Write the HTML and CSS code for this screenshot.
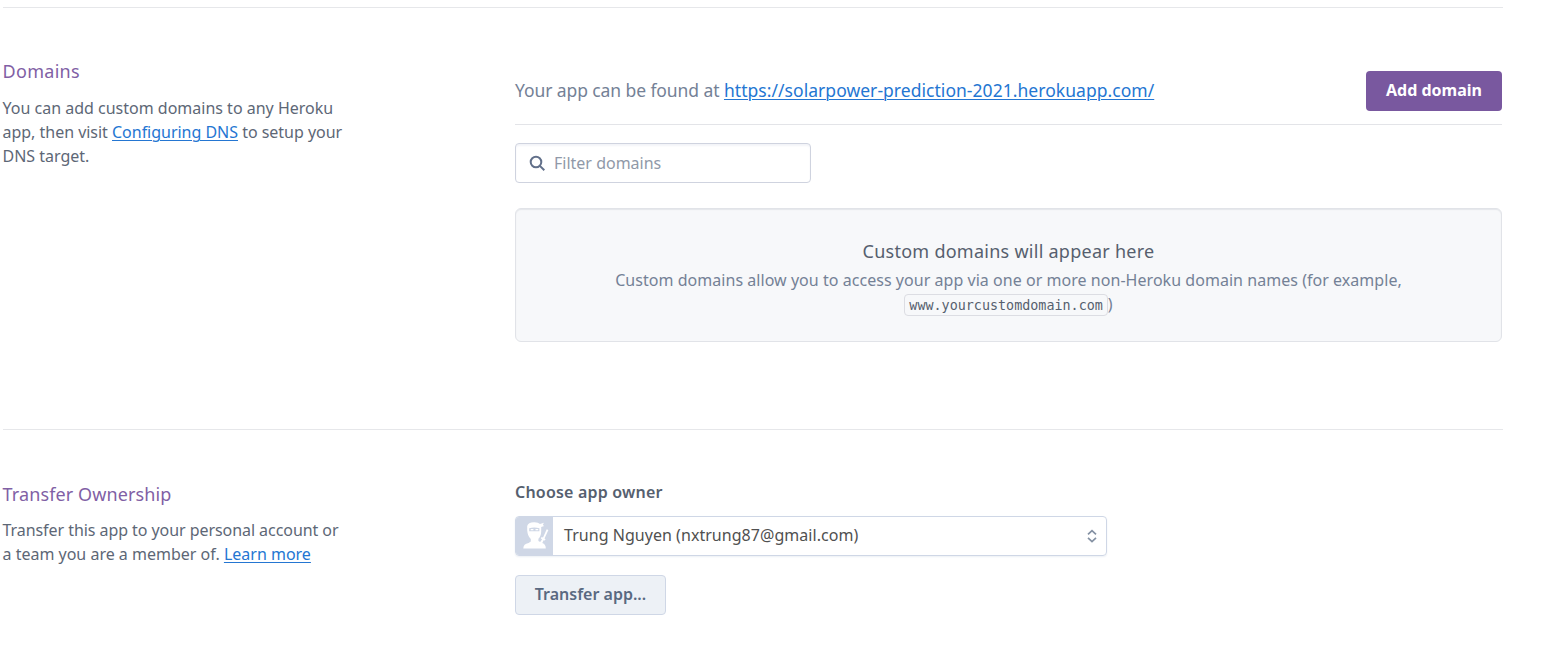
FILE: index.html
```html
<!DOCTYPE html>
<html lang="en">
<head>
<meta charset="utf-8">
<title>App settings</title>
<link rel="stylesheet" href="styles.css">
</head>
<body>
<main class="settings">
  <section class="section domains">
    <div class="intro">
      <h2 class="title domains-title">Domains</h2>
      <p class="copy">
        <span class="line line-add">You can add custom domains to any Heroku</span>
        <span class="line line-visit">app, then visit <a href="#">Configuring DNS</a> to setup your</span>
        <span class="line line-target">DNS target.</span>
      </p>
    </div>
    <div class="content">
      <div class="domain-bar">
        <p class="found"><span class="found-label">Your app can be found at</span> <a class="found-link" href="#">https://solarpower-prediction-2021.herokuapp.com/</a></p>
        <button class="button primary">Add domain</button>
      </div>
      <label class="filter">
        <svg class="search-icon" width="17" height="17" viewBox="0 0 17 17"><circle cx="7" cy="7" r="5.3"/><path d="M10.9 10.9l4.4 4.4"/></svg>
        <input class="filter-input" type="text" placeholder="Filter domains">
      </label>
      <div class="well">
        <h3 class="well-title">Custom domains will appear here</h3>
        <p class="well-copy">Custom domains allow you to access your app via one or more non-Heroku domain names (for example,</p>
        <p class="well-example"><code class="code">www.yourcustomdomain.com</code>)</p>
      </div>
    </div>
  </section>
  <section class="section transfer">
    <div class="intro">
      <h2 class="title transfer-title">Transfer Ownership</h2>
      <p class="copy">
        <span class="line line-account">Transfer this app to your personal account or</span>
        <span class="line line-team">a team you are a member of. <a href="#">Learn more</a></span>
      </p>
    </div>
    <div class="content">
      <div class="owner-label">Choose app owner</div>
      <div class="owner-select">
        <svg class="avatar" width="37" height="38" viewBox="0 0 37 38">
          <path class="ninja" d="M11.2 9Q12 5.5 18 5.2Q22.4 5.1 24 7L27.9 5.8L26.8 8L28.2 9L25.2 10V14.5Q25 19.5 22.4 21.7V24L24.2 25L26.1 22.2L24.8 21.4L25.6 20L27 20.6L30.7 12.2L32.4 13L28.5 21.4L29.6 22.2L28.8 23.6L27.6 23.2L26.3 26.1Q29.8 27.2 29.8 31.5H7.3Q7.3 26.7 12.6 25.9L14.8 24.5V22Q11.6 19.2 11.2 13.2Z"/>
          <path class="mask" d="M13.2 11.2Q18.2 9.8 23.4 11.2V14.2H13.2Z"/>
          <path class="eyes" d="M14.7 12.7h2.7M19.5 12.7h2.7"/>
        </svg>
        <span class="owner-name">Trung Nguyen (nxtrung87@gmail.com)</span>
        <svg class="sort-icon" width="12" height="16" viewBox="0 0 12 16"><path d="M2 6.4l4-3.7 4 3.7M2 9.8l4 3.7 4-3.7"/></svg>
      </div>
      <button class="button secondary">Transfer app...</button>
    </div>
  </section>
</main>
</body>
</html>
```

FILE: styles.css
```css
* { box-sizing: border-box; }
body { margin: 0; background: #fff; color: #596981; font: 16px/24px "Noto Sans", "Open Sans", sans-serif; }
h2, h3, p { margin: 0; font-weight: 400; }
a { color: #2476d2; text-decoration: underline; text-underline-offset: 2px; text-decoration-thickness: 1px; }
.settings { width: 1503px; padding: 7px 0 0 3px; }
.section { display: grid; grid-template-columns: 512px 987px; border-top: 1px solid #e6e7ea; }
.domains { height: 422px; padding-top: 50px; }
.transfer { padding-top: 51px; }
.title { color: #815fa5; font-size: 18px; line-height: 27px; margin-bottom: 11px; margin-left: -.5px; }
.domains-title { letter-spacing: .3px; }
.transfer-title { margin-bottom: 10px; letter-spacing: .12px; }
.copy { color: #5d6776; margin-left: -.5px; }
.line { display: block; white-space: nowrap; }
.line-visit { letter-spacing: -.02px; }
.line-account { letter-spacing: -.06px; }
.domain-bar { display: flex; justify-content: space-between; align-items: center; height: 67px; border-bottom: 1px solid #e3e4e8; }
.found { color: #748196; font-size: 17.5px; white-space: nowrap; padding-bottom: 2px; }
.found-label { letter-spacing: -.09px; }
.found-link { letter-spacing: .04px; }
.button { height: 40px; font: 600 16px/22px "Noto Sans", "Open Sans", sans-serif; border-radius: 4px; padding: 0 0 2px; white-space: nowrap; }
.primary { width: 136px; color: #fff; background: #79589f; border: 0; font-weight: 700; }
.filter { display: flex; align-items: center; width: 296px; height: 40px; margin-top: 18px; padding-left: 13px; gap: 8px; border: 1px solid #cfd3df; border-radius: 4px; box-shadow: inset 0 2px 2px #f3f4f8; }
.search-icon { fill: none; stroke: #62708a; stroke-width: 2; }
.filter-input { width: 240px; padding: 0; border: 0; outline: 0; background: none; font: inherit; }
.filter-input::placeholder { color: #9099a8; opacity: 1; }
.well { display: flex; flex-direction: column; align-items: center; height: 134px; margin-top: 25px; padding-top: 29px; background: #f7f8fa; border: 1px solid #e1e3e8; border-radius: 6px; box-shadow: inset 0 1px 1px #e4e6ea; white-space: nowrap; }
.well-title { color: #565f6e; font-size: 18px; line-height: 27px; margin-bottom: 3px; letter-spacing: .26px; }
.well-copy, .well-example { color: #748196; }
.well-copy { letter-spacing: .04px; }
.code { display: inline-block; height: 22px; padding: 0 4px; border: 1px solid #dcdde3; border-radius: 4px; color: #565f6e; font: 13.4px/22px "DejaVu Sans Mono", monospace; }
.owner-label { color: #56606f; font-weight: 600; margin: -1px 0 12px; letter-spacing: .2px; }
.owner-select { display: flex; align-items: center; width: 592px; height: 40px; border: 1px solid #cfd7e6; border-radius: 4px; overflow: hidden; box-shadow: 0 1px 2px #edf0f5; }
.avatar { background: #cfd7e6; margin-right: 11px; }
.ninja { fill: #fff; }
.mask { fill: #cfd7e6; }
.eyes { fill: none; stroke: #fff; stroke-width: 1.2; }
.owner-name { color: #505050; letter-spacing: .04px; padding-bottom: 2px; }
.sort-icon { margin: 0 8px 0 auto; fill: none; stroke: #8491a3; stroke-width: 1.7; }
.secondary { width: 151px; margin-top: 19px; color: #596981; background: #edf1f6; border: 1px solid #cfd7e6; }
```
